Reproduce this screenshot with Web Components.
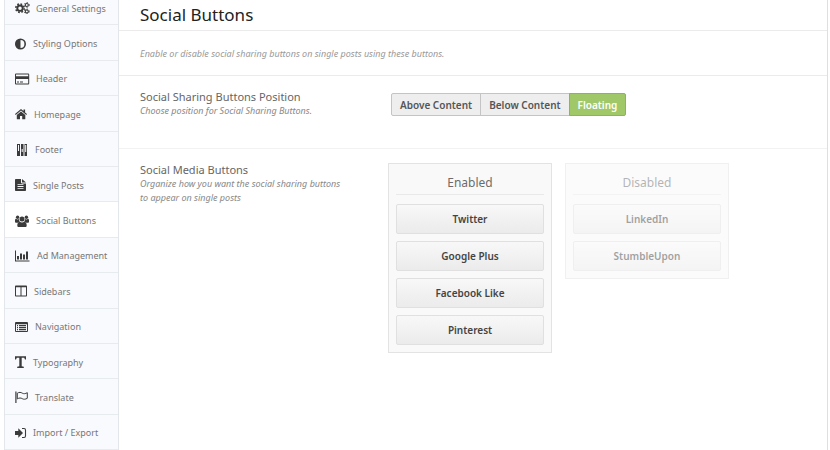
<!DOCTYPE html>
<html lang="en">
<head>
<meta charset="utf-8">
<meta name="viewport" content="width=device-width, initial-scale=1">
<title>Social Buttons</title>
<style>
  html, body {
    margin: 0;
    height: 100%;
  }
  body {
    overflow: hidden;
    background: #fff;
    color: #777;
    font-family: "Noto Sans", "Open Sans", sans-serif;
    font-size: 9px;
  }
</style>
</head>
<body>
<options-page>
  <options-nav slot="nav">
    <nav-item icon="cogs">General Settings</nav-item>
    <nav-item icon="adjust">Styling Options</nav-item>
    <nav-item icon="card">Header</nav-item>
    <nav-item icon="home">Homepage</nav-item>
    <nav-item icon="table">Footer</nav-item>
    <nav-item icon="file">Single Posts</nav-item>
    <nav-item icon="group" active>Social Buttons</nav-item>
    <nav-item icon="chart">Ad Management</nav-item>
    <nav-item icon="columns">Sidebars</nav-item>
    <nav-item icon="list">Navigation</nav-item>
    <nav-item icon="text">Typography</nav-item>
    <nav-item icon="flag">Translate</nav-item>
    <nav-item icon="signin">Import / Export</nav-item>
  </options-nav>

  <section-header>
    <span slot="title">Social Buttons</span>
    Enable or disable social sharing buttons on single posts using these buttons.
  </section-header>

  <option-row>
    <span slot="label">Social Sharing Buttons Position</span>
    <span slot="description">Choose position for Social Sharing Buttons.</span>
    <button-set label="Social Sharing Buttons Position" options="Above Content,Below Content,Floating" value="Floating"></button-set>
  </option-row>

  <option-row last>
    <span slot="label">Social Media Buttons</span>
    <span slot="description">Organize how you want the social sharing buttons to appear on single posts</span>
    <sorter-group>
      <sorter-list>
        <span slot="title">Enabled</span>
        <sorter-item>Twitter</sorter-item>
        <sorter-item>Google Plus</sorter-item>
        <sorter-item>Facebook Like</sorter-item>
        <sorter-item>Pinterest</sorter-item>
      </sorter-list>
      <sorter-list disabled>
        <span slot="title">Disabled</span>
        <sorter-item>LinkedIn</sorter-item>
        <sorter-item>StumbleUpon</sorter-item>
      </sorter-list>
    </sorter-group>
  </option-row>
</options-page>

<script>
// width and drawing for each menu icon, all 12px high
const ICONS = {
  cogs: [15, `
    <circle cx="5" cy="6.2" r="2.7" fill="none" stroke="currentColor" stroke-width="1.900"/>
    <circle cx="5" cy="6.2" r="4.2" fill="none" stroke="currentColor" stroke-width="1.6" stroke-dasharray="1.7 1.599"/>
    <circle cx="11.8" cy="3" r="1.5" fill="none" stroke="currentColor" stroke-width="1.1"/>
    <circle cx="11.8" cy="3" r="2.4" fill="none" stroke="currentColor" stroke-width="1" stroke-dasharray="1.2 1.313"/>
    <circle cx="11.8" cy="9.4" r="1.5" fill="none" stroke="currentColor" stroke-width="1.1"/>
    <circle cx="11.8" cy="9.4" r="2.4" fill="none" stroke="currentColor" stroke-width="1" stroke-dasharray="1.2 1.313"/>`],
  adjust: [12, `
    <circle cx="5.5" cy="6" r="4.7" fill="none" stroke="currentColor" stroke-width="1.6"/>
    <path d="M5.5 1a5 5 0 0 0 0 10z"/>`],
  card: [15, `
    <path fill-rule="evenodd" d="M1 .5h12.2a1 1 0 0 1 1 1v9a1 1 0 0 1-1 1H1a1 1 0 0 1-1-1v-9a1 1 0 0 1 1-1zM1 1.5v1.7h12.2V1.5zM1 6v4.5h12.2V6z"/>
    <path d="M2 8.6h2v1H2zM5 8.6h3v1H5z"/>`],
  home: [13, `
    <path d="M6 3.4l4.3 3.6v3.7a.5.5 0 0 1-.5.5H7.2V8H5v3.2H2.300a.5.5 0 0 1-.5-.5V7z"/>
    <path d="M6 1l2.500 2.100V1.500h1.600v3L12 6.100l-.7.800L6 2.500.7 6.900 0 6.100z"/>`],
  table: [14, `
    <path fill-rule="evenodd" d="M2 0h3v12H2zM3 1v6h1V1z"/>
    <path fill-rule="evenodd" d="M6 0h2.500v12H6zM6.700 5v3h1V5z"/>
    <path fill-rule="evenodd" d="M9.500 0H12v12H9.500zM10.200 1v7h1V1z"/>`],
  file: [12, `
    <path fill-rule="evenodd" d="M.8 0H6v3.600a.8.800 0 0 0 .8.800H11v6.800a.8.800 0 0 1-.8.800H.8a.8.800 0 0 1-.8-.8V.8A.8.800 0 0 1 .8 0zM2.500 5.200v.8h6v-.8zM2.500 7.100v.8h6v-.8zM2.500 9v.8h6V9z"/>
    <path d="M7 0l4 3.500H7z"/>`],
  group: [15, `
    <circle cx="2.600" cy="2.300" r="1.700"/>
    <circle cx="11.400" cy="2.300" r="1.700"/>
    <circle cx="7" cy="4" r="2.500"/>
    <path d="M0 7V5.500C0 4.300.5 3.800 1 3.800c1 .8 2.200.8 3 .3 0 1.300.3 2 .9 2.700-.8 0-1.500.3-2 .9H1C.4 7.700 0 7.500 0 7z"/>
    <path d="M14 7V5.500c0-1.200-.5-1.700-1-1.700-1 .8-2.200.8-3 .3 0 1.300-.3 2-.9 2.700.8 0 1.500.3 2 .9H13c.6 0 1-.2 1-.7z"/>
    <path d="M2.300 10.500c0-2 .8-3.800 2.400-3.800 1.400 1 3.200 1 4.600 0 1.600 0 2.400 1.800 2.400 3.800 0 1-.6 1.500-1.500 1.500H3.800c-.9 0-1.500-.5-1.500-1.500z"/>`],
  chart: [16, `
    <path d="M0 .5h1v10h13.500v1H0zM2 6h2v3.500H2zM5 3.500h2v6H5zM8 4.500h2v5H8zM11 1.500h2v8h-2z"/>`],
  columns: [13, `
    <path fill-rule="evenodd" d="M.8 .5h10.400a.8.800 0 0 1 .8.800v9.400a.8.800 0 0 1-.8.800H.8a.8.800 0 0 1-.8-.8V1.300A.8.800 0 0 1 .8.500zM1 2.300v8.200h4.500V2.300zM6.500 2.300v8.200H11V2.300z"/>`],
  list: [14, `
    <path fill-rule="evenodd" d="M1 1h11a1 1 0 0 1 1 1v8a1 1 0 0 1-1 1H1a1 1 0 0 1-1-1V2a1 1 0 0 1 1-1zM1 3.300V10h11V3.300z"/>
    <path d="M2 4h1v1.300H2zM4 4h7v1.300H4zM2 6h1v1.300H2zM4 6h7v1.300H4zM2 8h1v1.300H2zM4 8h7v1.300H4z"/>`],
  text: [12, `
    <path d="M0 .300h11v3.200h-1L9.200 1.700H6.700v8.500l2.100.6V12H2.200v-1.200l2.100-.6V1.700H1.800L1 3.500H0z"/>`],
  flag: [14, `
    <path d="M.3.500h1.200V12H.3z"/>
    <path d="M2.300 2.200c2-1.200 3.600-1 5 0 1.500.8 3 .6 5-.5v5.600c-2 1.100-3.500 1.200-5 .4-1.400-.9-3-1-5 .2z" fill="none" stroke="currentColor"/>`],
  signin: [12, `
    <path d="M0 4h3.300V1.300L8 6l-4.700 4.700V8H0z"/>
    <path d="M7 1.500h2A1.500 1.500 0 0 1 10.500 3v6A1.500 1.500 0 0 1 9 10.500H7" fill="none" stroke="currentColor" stroke-width="1.100"/>`]
};

class OptionsPage extends HTMLElement {
  connectedCallback() {
    this.attachShadow({ mode: 'open' });
    this.shadowRoot.innerHTML = `
      <style>
        :host {
          display: grid;
          grid-template-columns: 115px 1fr;
          box-sizing: border-box;
          min-height: 100vh;
          padding: 0 2px 0 4px;
        }
        main {
          border-right: 1px solid #dfdfdf;
        }
      </style>
      <slot name="nav"></slot>
      <main><slot></slot></main>
    `;
  }
}

class OptionsNav extends HTMLElement {
  connectedCallback() {
    this.attachShadow({ mode: 'open' });
    // the list starts a little above the fold, as when the panel is scrolled
    this.shadowRoot.innerHTML = `
      <style>
        :host {
          display: block;
          background: #f9fafd;
          border: solid #e3e6ea;
          border-width: 0 1px;
        }
        nav {
          display: flex;
          flex-direction: column;
          height: calc(100% + 10px);
          margin-top: -10px;
        }
      </style>
      <nav aria-label="Options"><slot></slot></nav>
    `;
  }
}

class NavItem extends HTMLElement {
  connectedCallback() {
    const [width, shape] = ICONS[this.getAttribute('icon')];
    this.attachShadow({ mode: 'open' });
    this.shadowRoot.innerHTML = `
      <style>
        :host {
          display: flex;
          flex: 1;
          border-bottom: 1px solid #e8ebee;
        }
        :host([active]) {
          background: #fff;
        }
        a {
          display: flex;
          flex: 1;
          align-items: center;
          gap: 6px;
          padding: 2px 0 0 10px;
          color: #777;
          text-decoration: none;
          white-space: nowrap;
        }
        svg {
          flex: none;
          color: #3b3b3b;
        }
      </style>
      <a href="#">
        <svg width="${width}" height="12" viewBox="0 0 ${width} 12" fill="currentColor" aria-hidden="true">${shape}</svg>
        <slot></slot>
      </a>
    `;
  }
}

class SectionHeader extends HTMLElement {
  connectedCallback() {
    this.attachShadow({ mode: 'open' });
    this.shadowRoot.innerHTML = `
      <style>
        :host {
          display: block;
        }
        h1, p {
          margin: 0;
          padding: 0 21px;
          border-bottom: 1px solid #ebebeb;
        }
        h1 {
          color: #222;
          font-size: 17px;
          font-weight: 400;
          line-height: 30px;
        }
        p {
          padding-top: 2px;
          color: #999;
          font-style: italic;
          line-height: 42px;
        }
      </style>
      <h1><slot name="title"></slot></h1>
      <p><slot></slot></p>
    `;
  }
}

class OptionRow extends HTMLElement {
  connectedCallback() {
    this.attachShadow({ mode: 'open' });
    this.shadowRoot.innerHTML = `
      <style>
        :host {
          display: grid;
          grid-template-columns: 210px 1fr;
          column-gap: 38px;
          box-sizing: border-box;
          min-height: 73px;
          padding: 14px 21px;
          border-bottom: 1px solid #f2f2f2;
        }
        :host([last]) {
          border-bottom: 0;
        }
        h2, p {
          margin: 0;
        }
        h2 {
          color: #666;
          font-size: 11px;
          font-weight: 400;
          line-height: 14px;
        }
        p {
          color: #888;
          font-style: italic;
          line-height: 14px;
        }
      </style>
      <div>
        <h2><slot name="label"></slot></h2>
        <p><slot name="description"></slot></p>
      </div>
      <div><slot></slot></div>
    `;
  }
}

class ButtonSet extends HTMLElement {
  connectedCallback() {
    const value = this.getAttribute('value');
    const buttons = this.getAttribute('options').split(',').map(option =>
      `<button type="button" aria-pressed="${option === value}">${option}</button>`
    ).join('');

    this.attachShadow({ mode: 'open' });
    this.shadowRoot.innerHTML = `
      <style>
        :host {
          display: block;
          padding: 3px;
        }
        div {
          display: flex;
        }
        button {
          height: 23px;
          margin: 0 0 0 -1px;
          padding: 0 8px;
          border: 1px solid #c4c4c4;
          background: #eee;
          color: #555;
          font: 600 10px/20px "Noto Sans", "Open Sans", sans-serif;
          cursor: pointer;
        }
        button:first-child {
          margin-left: 0;
          border-radius: 2px 0 0 2px;
        }
        button:last-child {
          border-radius: 0 2px 2px 0;
        }
        button[aria-pressed="true"] {
          border-color: #8fb35d;
          background: #a0c869;
          color: #fff;
        }
      </style>
      <div role="group" aria-label="${this.getAttribute('label')}">${buttons}</div>
    `;

    this.shadowRoot.querySelectorAll('button').forEach(button => {
      button.addEventListener('click', () => {
        this.shadowRoot.querySelectorAll('button').forEach(other => {
          other.setAttribute('aria-pressed', other === button);
        });
      });
    });
  }
}

class SorterGroup extends HTMLElement {
  connectedCallback() {
    this.attachShadow({ mode: 'open' });
    this.shadowRoot.innerHTML = `
      <style>
        :host {
          display: flex;
          flex-wrap: wrap;
          align-items: flex-start;
          gap: 13px;
        }
      </style>
      <slot></slot>
    `;
  }
}

class SorterList extends HTMLElement {
  connectedCallback() {
    this.attachShadow({ mode: 'open' });
    this.shadowRoot.innerHTML = `
      <style>
        :host {
          display: flex;
          flex-direction: column;
          gap: 7px;
          box-sizing: border-box;
          width: 164px;
          padding: 7px;
          border: 1px solid #e3e3e3;
          background: #f9f9f9;
        }
        :host([disabled]) {
          opacity: 0.5;
        }
        h3 {
          margin: 0 0 2px;
          border-bottom: 1px solid #e9e9e9;
          color: #6c6c6c;
          font-size: 12px;
          font-weight: 400;
          line-height: 23px;
          text-align: center;
        }
      </style>
      <h3><slot name="title"></slot></h3>
      <slot></slot>
    `;
  }
}

class SorterItem extends HTMLElement {
  connectedCallback() {
    this.attachShadow({ mode: 'open' });
    this.shadowRoot.innerHTML = `
      <style>
        :host {
          display: flex;
        }
        button {
          flex: 1;
          height: 30px;
          padding: 0;
          border: 1px solid #e0e0e0;
          border-radius: 2px;
          background: linear-gradient(#f8f8f8, #ebebeb);
          color: #444;
          font: 600 10px/20px "Noto Sans", "Open Sans", sans-serif;
          cursor: move;
        }
      </style>
      <button type="button"><slot></slot></button>
    `;
  }
}

customElements.define('options-page', OptionsPage);
customElements.define('options-nav', OptionsNav);
customElements.define('nav-item', NavItem);
customElements.define('section-header', SectionHeader);
customElements.define('option-row', OptionRow);
customElements.define('button-set', ButtonSet);
customElements.define('sorter-group', SorterGroup);
customElements.define('sorter-list', SorterList);
customElements.define('sorter-item', SorterItem);
</script>
</body>
</html>
